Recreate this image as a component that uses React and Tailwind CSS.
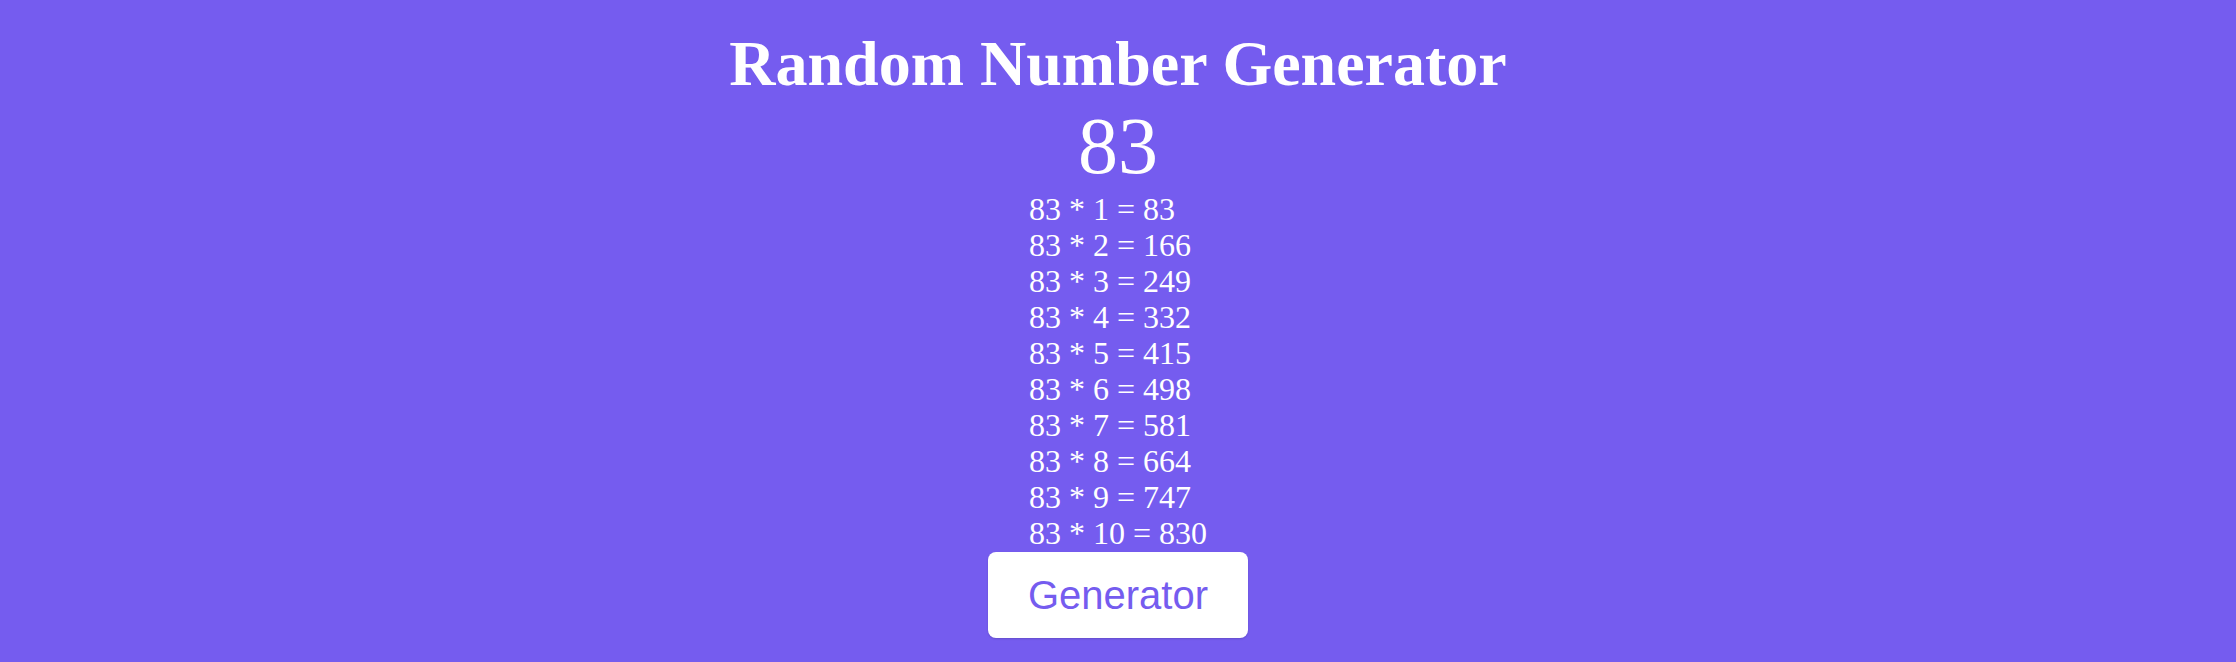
import React, { useState } from "react";

export default function App() {
  const [num, setNum] = useState(83);
  const rows = Array.from({ length: 10 }, (_, i) => i + 1);
  return (
    <div className="min-h-screen w-full bg-[#755cef] text-white flex flex-col items-center font-['Liberation_Serif',serif]">
      <h1 className="mt-[27px] text-[64px] leading-[74px] font-bold">Random Number Generator</h1>
      <div className="text-[80px] leading-[90px]">{num}</div>
      <div className="flex flex-col items-start text-[32px] leading-[36px]">
        {rows.map((r) => (
          <div key={r}>
            {num} * {r} = {num * r}
          </div>
        ))}
      </div>
      <button
        onClick={() => setNum(Math.floor(Math.random() * 100) + 1)}
        className="mt-[1px] bg-white text-[#755cef] rounded-lg px-10 py-5 text-[40px] leading-[46px] font-['Liberation_Sans',Arial,sans-serif] shadow-[0_1px_2px_rgba(0,0,0,0.15)]"
      >
        Generator
      </button>
    </div>
  );
}
